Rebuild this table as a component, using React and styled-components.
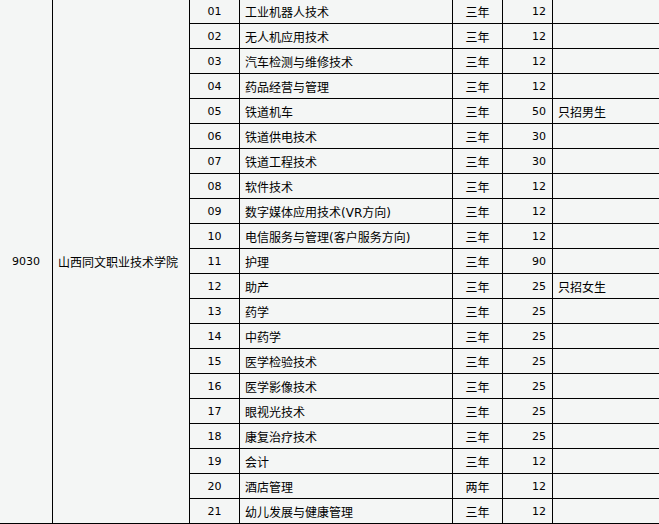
import styled, { createGlobalStyle } from "styled-components";

const GlobalStyle = createGlobalStyle`
  html, body {
    margin: 0;
    padding: 0;
    overflow: hidden;
    background: #f4f6f5;
  }
`;

const Grid = styled.div`
  display: grid;
  grid-template-columns: 52px 136px 49px 212px 49px 49px 1fr;
  grid-auto-rows: 24px;
  gap: 1px;
  width: 659px;
  padding: 1px;
  margin: -2px 0 0 -1px;
  background: #000;
  color: #000;
`;

const Cell = styled.div`
  display: flex;
  align-items: center;
  justify-content: ${(p) =>
    p.$align === "center" ? "center" : p.$align === "right" ? "flex-end" : "flex-start"};
  padding: 1px ${(p) => (p.$align === "right" ? "6px" : "5px")} 0;
  background: #f4f6f5;
  font-family: "DejaVu Sans", "Noto Sans CJK SC", sans-serif;
  font-size: ${(p) => (p.$num ? "11px" : "12px")};
  white-space: nowrap;
  overflow: hidden;
`;

const SpanCell = styled(Cell)`
  grid-row: span 21;
`;

const rows = [
  ["01", "工业机器人技术", "三年", "12", ""],
  ["02", "无人机应用技术", "三年", "12", ""],
  ["03", "汽车检测与维修技术", "三年", "12", ""],
  ["04", "药品经营与管理", "三年", "12", ""],
  ["05", "铁道机车", "三年", "50", "只招男生"],
  ["06", "铁道供电技术", "三年", "30", ""],
  ["07", "铁道工程技术", "三年", "30", ""],
  ["08", "软件技术", "三年", "12", ""],
  ["09", "数字媒体应用技术(VR方向)", "三年", "12", ""],
  ["10", "电信服务与管理(客户服务方向)", "三年", "12", ""],
  ["11", "护理", "三年", "90", ""],
  ["12", "助产", "三年", "25", "只招女生"],
  ["13", "药学", "三年", "25", ""],
  ["14", "中药学", "三年", "25", ""],
  ["15", "医学检验技术", "三年", "25", ""],
  ["16", "医学影像技术", "三年", "25", ""],
  ["17", "眼视光技术", "三年", "25", ""],
  ["18", "康复治疗技术", "三年", "25", ""],
  ["19", "会计", "三年", "12", ""],
  ["20", "酒店管理", "两年", "12", ""],
  ["21", "幼儿发展与健康管理", "三年", "12", ""],
];

export default function App() {
  return (
    <>
      <GlobalStyle />
      <Grid>
        <SpanCell $align="center" $num>
          9030
        </SpanCell>
        <SpanCell>山西同文职业技术学院</SpanCell>
        {rows.map(([code, name, years, count, note]) => (
          <>
            <Cell key={code + "c"} $align="center" $num>
              {code}
            </Cell>
            <Cell key={code + "n"}>{name}</Cell>
            <Cell key={code + "y"} $align="center">
              {years}
            </Cell>
            <Cell key={code + "k"} $align="right" $num>
              {count}
            </Cell>
            <Cell key={code + "t"}>{note}</Cell>
          </>
        ))}
      </Grid>
    </>
  );
}
